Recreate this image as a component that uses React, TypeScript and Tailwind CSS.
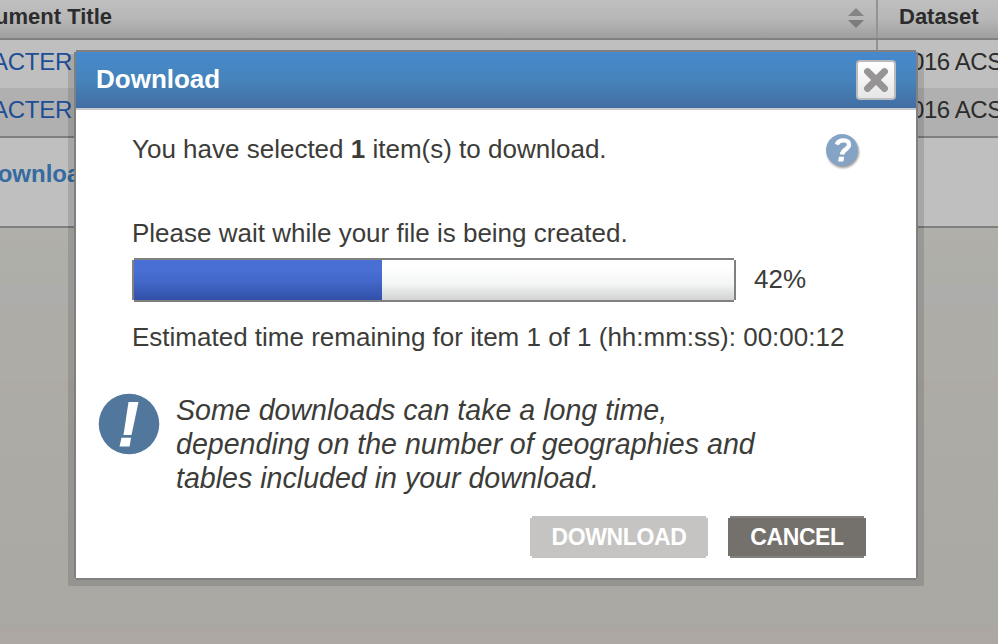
import React from "react";

const edge =
  "shadow-[2px_0_0_#808080,-2px_0_0_#808080,0_2px_0_#808080,0_-2px_0_#808080]";

function SortIcon() {
  return (
    <svg width="18" height="22" viewBox="0 0 18 22" className="mr-[11px] shrink-0">
      <path d="M9 1 L17 9 H1 Z" fill="#858585" />
      <path d="M9 21 L17 13 H1 Z" fill="#7d7d7d" />
    </svg>
  );
}

function Row({ shade }: { shade: string }) {
  return (
    <div className={"flex h-12 " + shade}>
      <div className="flex w-[878px] shrink-0 border-r-2 border-[#939393] text-[#1c4f96]">
        <span className="flex w-[72px] justify-end pt-[7px] tracking-[-0.25px]">CHARACTER</span>
      </div>
      <span className="shrink-0 whitespace-nowrap pl-5 pt-[7px] tracking-[-0.4px]">2016 ACS</span>
    </div>
  );
}

function Results() {
  return (
    <div className="flex h-[644px] flex-col text-[24px] leading-[30px] text-[#2c2c2c]">
      <div className="flex h-10 shrink-0 border-b-2 border-[#808080] bg-linear-to-b from-[#bfbfbf] via-[#b7b7b7] to-[#9f9f9f] text-[22px] font-bold">
        <div className="flex w-[878px] shrink-0 items-center justify-between border-r-2 border-[#939393] pb-[2px]">
          <span className="flex w-[112px] justify-end whitespace-nowrap pb-[2px]">Document Title</span>
          <SortIcon />
        </div>
        <span className="pl-[21px] pt-[2px]">Dataset</span>
      </div>
      <Row shade="bg-[#bfbfbf]" />
      <Row shade="bg-[#b0b0b0]" />
      <div className="h-[92px] shrink-0 border-y-2 border-[#808080] bg-[#bfbfbf] pt-[21px] font-bold text-[#356ba0]">
        <span className="flex w-[95px] justify-end">Download</span>
      </div>
      <div className="grow bg-[linear-gradient(to_bottom,#b0afaa_0px,#aeaea9_56px,#adadac_58px,#adadac_76px,#adaca7_78px,#adaca7_150px,#aeaaa6_152px,#aeaaa6_163px,#acaba6_165px,#a9a8a3_398px,#aca7a3_402px,#aca7a3_416px)]" />
    </div>
  );
}

function CloseButton() {
  return (
    <button aria-label="Close" className="flex size-10 items-center justify-center rounded-[4px] border-2 border-[#b9bbbd] bg-linear-to-b from-white to-[#e6e6e6]">
      <svg width="26" height="26" viewBox="0 0 26 26">
        <path d="M4.5 4.5 L21.5 21.5 M21.5 4.5 L4.5 21.5" stroke="#969494" strokeWidth="6.8" strokeLinecap="round" />
      </svg>
    </button>
  );
}

function HelpIcon() {
  return (
    <svg width="38" height="38" viewBox="0 0 38 38" className="-mt-px drop-shadow-[1px_2px_1px_rgba(0,0,0,0.4)]">
      <circle cx="18" cy="18" r="16" fill="#85a4c5" />
      <path d="M12.9 12.6 C13.8 9.3 16.5 8.4 19.5 8.4 C23.4 8.4 25.4 10.3 25 13.4 C24.4 17.2 18.6 17.4 18 22.6" fill="none" stroke="white" strokeWidth="4.4" />
      <path d="M14.9 24.8 H20.1 L19.4 29.6 H14.2 Z" fill="white" />
    </svg>
  );
}

function WarningIcon() {
  return (
    <svg width="62" height="62" viewBox="0 0 62 62" className="shrink-0">
      <circle cx="31" cy="31" r="30.3" fill="#52779c" />
      <path d="M30.5 9 H40.5 L33.5 42 H25.5 Z" fill="white" />
      <path d="M23.5 44.7 H33 L31.6 53.5 H21.5 Z" fill="white" />
    </svg>
  );
}

function DownloadDialog() {
  return (
    <div className="absolute left-[68px] top-[54px] h-[532px] w-[856px] bg-black/12">
      <div className={"relative -top-[2px] left-[8px] flex h-[526px] w-[840px] flex-col bg-white text-[26px] leading-[30px] text-[#3c3c39] " + edge}>
        <div className="flex h-[58px] shrink-0 items-center justify-between border-b-2 border-[#c8c9cc] bg-linear-to-b from-[#4689cd] via-[#4584bb] to-[#426da3] pl-[20px] pr-[20px]">
          <span className="pb-[2px] font-bold text-white">Download</span>
          <CloseButton />
        </div>
        <div className="flex h-[106px] shrink-0 justify-between pl-14 pr-[54px] pt-[23px]">
          <p className="whitespace-nowrap pt-[1px]">You have selected <b>1</b> item(s) to download.</p>
          <HelpIcon />
        </div>
        <div className="pl-14">
          <p className="mt-[2px] whitespace-nowrap">Please wait while your file is being created.</p>
          <div className="mt-[12px] flex h-10 items-center">
            <div className={"ml-[2px] h-10 w-[600px] bg-linear-to-b from-white from-20% via-[#f4f5f5] via-60% to-[#d1d3d4] " + edge}>
              <div className="h-10 w-[248px] bg-linear-to-b from-[#496fd5] from-25% via-[#4367c9] via-55% to-[#3150a9]" />
            </div>
            <span className="ml-[20px] pb-[2px]">42%</span>
          </div>
          <p className="mt-[22px] whitespace-nowrap">Estimated time remaining for item 1 of 1 (hh:mm:ss): 00:00:12</p>
        </div>
        <div className="mt-[41px] flex pl-[22px]">
          <WarningIcon />
          <p className="ml-[16px] whitespace-nowrap text-[28.6px] italic leading-[34px]">
            Some downloads can take a long time,
            <br />
            depending on the number of geographies and
            <br />
            tables included in your download.
          </p>
        </div>
        <div className="mt-[23px] flex justify-end gap-[24px] pr-[52px] text-[23px] font-bold tracking-[-0.4px] text-white">
          <button className="h-[38px] w-[174px] bg-[#c5c4c2] leading-[36px] shadow-[2px_0_0_#c5c4c2,-2px_0_0_#c5c4c2,0_2px_0_#c5c4c2,0_-2px_0_#c5c4c2]">DOWNLOAD</button>
          <button className="h-[38px] w-[134px] bg-[#74716c] leading-[36px] shadow-[2px_0_0_#74716c,-2px_0_0_#74716c,0_2px_0_#838180,0_-2px_0_#838180]">CANCEL</button>
        </div>
      </div>
    </div>
  );
}

export default function App() {
  return (
    <div className="relative h-[644px] w-[998px] overflow-hidden font-['Liberation_Sans',Arial,sans-serif]">
      <Results />
      <DownloadDialog />
    </div>
  );
}
